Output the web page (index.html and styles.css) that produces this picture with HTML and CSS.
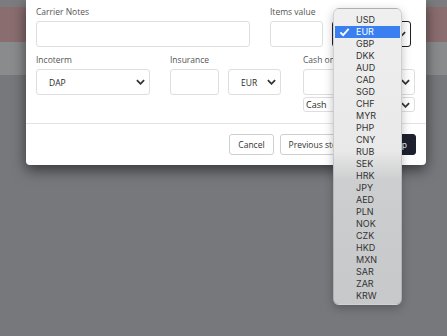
FILE: index.html
```html
<!DOCTYPE html>
<html lang="en">
<head>
    <meta charset="UTF-8">
    <meta name="viewport" content="width=device-width, initial-scale=1.0">
    <title>Shipment details</title>
    <link rel="stylesheet" href="styles.css">
</head>
<body>
    <!-- page behind the modal, already dimmed by the backdrop -->
    <div class="page">
        <div class="page-top"></div>
        <div class="page-alert"></div>
        <div class="page-bar"></div>
    </div>

    <div class="modal">
        <div class="modal-body">
            <div class="row">
                <div class="field field-notes">
                    <label>Carrier Notes</label>
                    <input class="control" type="text">
                </div>
                <div class="field field-value">
                    <label>Items value</label>
                    <div class="group">
                        <input class="control grow" type="text">
                        <div class="control select focused">
                            <span>EUR</span>
                            <svg class="chevron" viewBox="0 0 10 6"><polyline points="1,1 5,5 9,1"/></svg>
                        </div>
                    </div>
                </div>
            </div>

            <div class="row">
                <div class="field field-incoterm">
                    <label>Incoterm</label>
                    <div class="control select">
                        <span>DAP</span>
                        <svg class="chevron" viewBox="0 0 10 6"><polyline points="1,1 5,5 9,1"/></svg>
                    </div>
                </div>
                <div class="field field-insurance">
                    <label>Insurance</label>
                    <div class="group">
                        <input class="control insurance" type="text">
                        <div class="control select currency">
                            <span>EUR</span>
                            <svg class="chevron" viewBox="0 0 10 6"><polyline points="1,1 5,5 9,1"/></svg>
                        </div>
                    </div>
                </div>
                <div class="field field-cod">
                    <label>Cash on delivery</label>
                    <div class="control select">
                        <span></span>
                        <svg class="chevron" viewBox="0 0 10 6"><polyline points="1,1 5,5 9,1"/></svg>
                    </div>
                    <div class="control select small">
                        <span>Cash</span>
                        <svg class="chevron" viewBox="0 0 10 6"><polyline points="1,1 5,5 9,1"/></svg>
                    </div>
                </div>
            </div>
        </div>

        <div class="modal-footer">
            <button class="btn-secondary">Cancel</button>
            <button class="btn-secondary">Previous step</button>
            <button class="btn-primary">Next step</button>
        </div>
    </div>

    <!-- native currency picker, opened from the Items value select -->
    <div class="menu">
        <ul>
            <li>USD</li>
            <li class="selected">
                <svg class="check" viewBox="0 0 12 10"><polyline points="1.5,5.5 4.5,8.5 10.5,1.5"/></svg>
                EUR
            </li>
            <li>GBP</li>
            <li>DKK</li>
            <li>AUD</li>
            <li>CAD</li>
            <li>SGD</li>
            <li>CHF</li>
            <li>MYR</li>
            <li>PHP</li>
            <li>CNY</li>
            <li>RUB</li>
            <li>SEK</li>
            <li>HRK</li>
            <li>JPY</li>
            <li>AED</li>
            <li>PLN</li>
            <li>NOK</li>
            <li>CZK</li>
            <li>HKD</li>
            <li>MXN</li>
            <li>SAR</li>
            <li>ZAR</li>
            <li>KRW</li>
        </ul>
    </div>
</body>
</html>
```

FILE: styles.css
```css
:root {
    --overlay: #77787c;
    --border: #dedede;
    --label: #555555;
    --text: #2a2a2a;
    --dark: #1e2030;
    --menu-blue: #3a7ff0;
}

* {
    margin: 0;
    padding: 0;
    box-sizing: border-box;
}

body {
    background-color: var(--overlay);
    font-family: 'Open Sans', 'Liberation Sans', sans-serif;
    overflow: hidden;
}

.page-top {
    height: 7px;
    background-color: #7b7c7f;
}

.page-alert {
    height: 35px;
    background-color: #8a6d6f;
}

.page-bar {
    height: 33px;
    background-color: #8a8b8d;
}

.modal {
    position: absolute;
    left: 26px;
    top: 0;
    width: 400px;
    background-color: #ffffff;
    border-radius: 0 0 4px 4px;
    box-shadow: 0 5px 14px rgba(0, 0, 0, 0.55);
}

.modal-body {
    padding: 6px 10px 11px 10px;
    display: flex;
    flex-direction: column;
    gap: 7px;
}

.row {
    display: flex;
    gap: 20px;
}

.field {
    display: flex;
    flex-direction: column;
    flex-shrink: 0;
}

.field label {
    font-size: 8.5px;
    line-height: 12px;
    color: var(--label);
    margin-bottom: 3px;
    white-space: nowrap;
}

.control {
    height: 26px;
    border: 1px solid var(--border);
    border-radius: 3px;
    background-color: #ffffff;
    font-family: inherit;
    font-size: 8.5px;
    color: var(--text);
}

.group {
    display: flex;
    gap: 9px;
}

.grow {
    flex: 1;
    min-width: 0;
}

.select {
    display: flex;
    align-items: center;
    justify-content: space-between;
    padding: 0 4px 0 12px;
}

.chevron {
    width: 9px;
    height: 6px;
    fill: none;
    stroke: #333333;
    stroke-width: 2;
}

.focused {
    width: 79px;
    border: 1.5px solid #222222;
}

.field-notes {
    width: 214px;
}

.field-value {
    width: 141px;
}

.field-incoterm {
    width: 114px;
}

.field-insurance {
    width: 111px;
}

.insurance {
    width: 49px;
}

.currency {
    width: 53px;
}

.field-cod {
    width: 112px;
    margin-left: 2px;
}

.small {
    height: 15px;
    margin-top: 2px;
    padding-left: 2px;
    font-size: 9px;
}

.modal-footer {
    border-top: 1px solid #e3e3e3;
    padding: 10px 10px 10px 0;
    display: flex;
    justify-content: flex-end;
    gap: 6px;
}

button {
    height: 21px;
    padding: 0 8px;
    border-radius: 3px;
    font-family: inherit;
    font-size: 8.5px;
    cursor: pointer;
}

.btn-secondary {
    background-color: #ffffff;
    border: 1px solid #cfcfcf;
    color: #333333;
}

.btn-primary {
    background-color: var(--dark);
    border: 1px solid var(--dark);
    color: #ffffff;
    min-width: 59px;
    text-align: right;
}

.menu {
    position: absolute;
    left: 333px;
    top: 8px;
    width: 69px;
    height: 297px;
    padding: 5px 1px 4px;
    border-radius: 6px;
    border: 1px solid rgba(0, 0, 0, 0.12);
    background: linear-gradient(#efefef 0%, #e9e9e9 48%, #cdcecf 58%, #c7c8ca 100%);
    box-shadow: 0 3px 10px rgba(0, 0, 0, 0.25);
}

.menu ul {
    list-style: none;
}

.menu li {
    position: relative;
    height: 12px;
    line-height: 12px;
    padding-left: 21px;
    font-family: Inter, 'Liberation Sans', sans-serif;
    font-size: 9px;
    font-weight: 400;
    color: #333333;
}

.menu li.selected {
    background-color: var(--menu-blue);
    color: #ffffff;
}

.check {
    position: absolute;
    left: 4px;
    top: 1px;
    width: 11px;
    height: 10px;
    fill: none;
    stroke: #ffffff;
    stroke-width: 2;
}
```
